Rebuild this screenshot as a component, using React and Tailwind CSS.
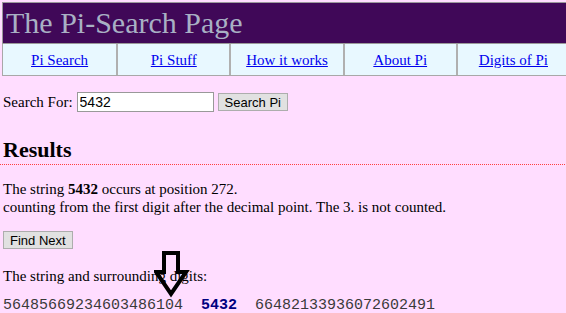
import React, { useState } from 'react';

const links = ['Pi Search', 'Pi Stuff', 'How it works', 'About Pi', 'Digits of Pi'];

const DownArrow = () => (
  <svg width="36" height="48" viewBox="0 0 36 48" className="absolute left-[154px] top-[250px]">
    <path d="M10 3 H24 V22 H32 L17 44 L2 22 H10 Z" fill="none" stroke="#000" strokeWidth="4" strokeLinejoin="miter" />
  </svg>
);

const App = () => {
  const [query, setQuery] = useState('5432');

  return (
    <div className="relative min-h-[313px] w-[566px] overflow-hidden bg-[#ffddff] font-['Liberation_Serif',serif] text-[15px] text-black">
      <div className="pt-[2px] pl-[2px] w-[570px]">
        <div className="border border-[#9a9a9a] bg-[#400858] h-[42px] flex items-center pl-[3px]">
          <h1 className="text-[30px] leading-none text-[#a8b0c4]">The Pi-Search Page</h1>
        </div>
        <div className="grid grid-cols-5 h-[32px] bg-[#e8f8ff] border border-t-0 border-[#a8a8a8]">
          {links.map((l, i) => (
            <div
              key={l}
              className={`flex items-center justify-center pt-[1px] ${i > 0 ? 'border-l-2 border-[#b0b0b0]' : ''}`}
            >
              <a href="#" className="text-[#0000ee] underline text-[15px]">{l}</a>
            </div>
          ))}
        </div>
      </div>

      <div className="px-[3px]">
        <div className="flex items-center mt-[16px] h-[20px]">
          <span className="mr-[4px]">Search For:</span>
          <input
            value={query}
            onChange={(e) => setQuery(e.target.value)}
            className="w-[137px] h-[20px] border border-[#999] bg-white px-[2px] text-[14px] font-['Liberation_Sans',sans-serif] outline-none"
          />
          <button className="ml-[4px] h-[18px] px-[6px] bg-[#e1e1e1] border border-[#adadad] text-[13px] leading-none font-['Liberation_Sans',sans-serif]">
            Search Pi
          </button>
        </div>

        <h2 className="mt-[25px] text-[22px] font-bold leading-[26px]">Results</h2>
      </div>
      <div className="mt-[1px] h-px bg-[repeating-linear-gradient(90deg,#ff4040_0px,#ff4040_1px,transparent_1px,transparent_2px)]" />

      <div className="px-[3px]">
        <p className="mt-[15px] leading-[18px]">
          The string <b>5432</b> occurs at position 272.
          <br />
          counting from the first digit after the decimal point. The 3. is not counted.
        </p>
        <button className="mt-[15px] h-[18px] px-[6px] bg-[#e1e1e1] border border-[#adadad] text-[13px] leading-none font-['Liberation_Sans',sans-serif]">
          Find Next
        </button>
        <p className="mt-[16px] leading-[18px]">The string and surrounding digits:</p>
        <p className="mt-[12px] font-['Liberation_Mono',monospace] text-[15px] text-[#3a3a3a] whitespace-pre leading-[18px]">
          {'56485669234603486104  '}
          <b className="text-[#000080]">5432</b>
          {'  66482133936072602491'}
        </p>
      </div>

      <DownArrow />
    </div>
  );
};

export default App;
